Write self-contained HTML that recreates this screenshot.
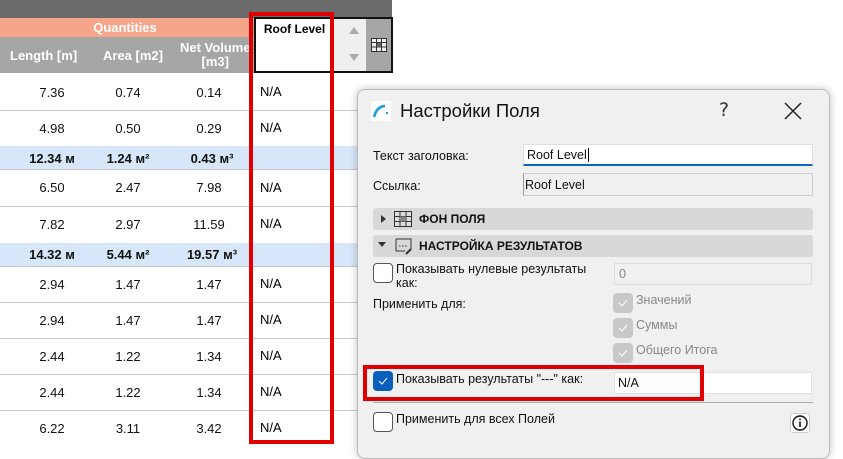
<!DOCTYPE html>
<html><head><meta charset="utf-8"><style>
*{margin:0;padding:0;box-sizing:border-box}
body{width:843px;height:445px;overflow:hidden;background:#fff;position:relative;font-family:"Liberation Sans","Noto Sans CJK SC",sans-serif}
.a{position:absolute}
.num{position:absolute;font-size:13px;color:#111;width:80px;text-align:center}
.b{font-weight:bold}
.sep{position:absolute;left:0;width:392px;height:1px;background:#c8c8c8}
.sub{position:absolute;left:0;width:392px;height:23px;background:#d7e6f8}
.lbl{position:absolute;font-size:12.5px;color:#111;font-family:"Liberation Sans",sans-serif}
.cb{position:absolute;width:20px;height:20px;border:1px solid #555;border-radius:4px;background:#fff}
.dcb{position:absolute;width:20px;height:20px;border-radius:4px;background:#c8c8c8}
.fld{position:absolute;background:#fff;border:1px solid #e0e0e0}
</style></head><body>
<div class="a" style="left:0;top:0;width:392px;height:18px;background:#6b6b6b"></div>
<div class="a" style="left:0;top:18px;width:250px;height:19px;background:#f4a58a;color:#fff;font-weight:bold;font-size:13px;text-align:center;line-height:19px">Quantities</div>
<div class="a" style="left:0;top:37px;width:250px;height:36px;background:#a6a6a6"></div>
<div class="a b" style="left:10px;top:48px;color:#fff;font-size:13px">Length [m]</div>
<div class="a b" style="left:103px;top:48px;color:#fff;font-size:13px">Area [m2]</div>
<div class="a b" style="left:180px;top:41px;color:#fff;font-size:13px;text-align:center;line-height:14px">Net Volume<br>[m3]</div>
<div class="a" style="left:250px;top:18px;width:142px;height:55px;background:#a6a6a6"></div>
<div class="a" style="left:254px;top:17px;width:139px;height:56px;border:2px solid #111;background:#a6a6a6"></div>
<div class="a" style="left:256px;top:19px;width:77px;height:52px;background:#fff;font-size:12px;font-weight:bold;text-align:center;padding-top:3px">Roof Level</div>
<div class="a" style="left:334px;top:19px;width:32px;height:52px;background:#efefef"></div>
<div class="a" style="left:349px;top:27px;border:5px solid transparent;border-bottom:7px solid #aaa;border-top:0"></div>
<div class="a" style="left:349px;top:54px;border:5px solid transparent;border-top:7px solid #aaa;border-bottom:0"></div>
<svg class="a" style="left:371px;top:38px" width="16" height="14"><rect x="0.5" y="0.5" width="15" height="13" fill="#eee" stroke="#333"/><path d="M0 4.5H16M0 9H16M5.5 0V14M10.5 0V14" stroke="#333"/><rect x="6" y="5" width="4" height="4" fill="#666"/></svg>

<div class="sep" style="top:110px"></div>
<div class="sub" style="top:146px"></div>
<div class="sep" style="top:169px"></div>
<div class="sep" style="top:206px"></div>
<div class="sub" style="top:243px"></div>
<div class="sep" style="top:266px"></div>
<div class="sep" style="top:302px"></div>
<div class="sep" style="top:338px"></div>
<div class="sep" style="top:374px"></div>
<div class="sep" style="top:410px"></div>

<div class="num" style="left:12px;top:85px">7.36</div><div class="num" style="left:88px;top:85px">0.74</div><div class="num" style="left:169px;top:85px">0.14</div>
<div class="num" style="left:12px;top:121px">4.98</div><div class="num" style="left:88px;top:121px">0.50</div><div class="num" style="left:169px;top:121px">0.29</div>
<div class="num b" style="left:12px;top:151px">12.34 м</div><div class="num b" style="left:88px;top:151px">1.24 м²</div><div class="num b" style="left:172px;top:151px">0.43 м³</div>
<div class="num" style="left:12px;top:180px">6.50</div><div class="num" style="left:88px;top:180px">2.47</div><div class="num" style="left:169px;top:180px">7.98</div>
<div class="num" style="left:12px;top:217px">7.82</div><div class="num" style="left:88px;top:217px">2.97</div><div class="num" style="left:169px;top:217px">11.59</div>
<div class="num b" style="left:12px;top:247px">14.32 м</div><div class="num b" style="left:88px;top:247px">5.44 м²</div><div class="num b" style="left:172px;top:247px">19.57 м³</div>
<div class="num" style="left:12px;top:277px">2.94</div><div class="num" style="left:88px;top:277px">1.47</div><div class="num" style="left:169px;top:277px">1.47</div>
<div class="num" style="left:12px;top:313px">2.94</div><div class="num" style="left:88px;top:313px">1.47</div><div class="num" style="left:169px;top:313px">1.47</div>
<div class="num" style="left:12px;top:349px">2.44</div><div class="num" style="left:88px;top:349px">1.22</div><div class="num" style="left:169px;top:349px">1.34</div>
<div class="num" style="left:12px;top:385px">2.44</div><div class="num" style="left:88px;top:385px">1.22</div><div class="num" style="left:169px;top:385px">1.34</div>
<div class="num" style="left:12px;top:421px">6.22</div><div class="num" style="left:88px;top:421px">3.11</div><div class="num" style="left:169px;top:421px">3.42</div>
<div class="a" style="left:260px;top:84px;font-size:13px">N/A</div>
<div class="a" style="left:260px;top:120px;font-size:13px">N/A</div>
<div class="a" style="left:260px;top:180px;font-size:13px">N/A</div>
<div class="a" style="left:260px;top:216px;font-size:13px">N/A</div>
<div class="a" style="left:260px;top:276px;font-size:13px">N/A</div>
<div class="a" style="left:260px;top:312px;font-size:13px">N/A</div>
<div class="a" style="left:260px;top:348px;font-size:13px">N/A</div>
<div class="a" style="left:260px;top:384px;font-size:13px">N/A</div>
<div class="a" style="left:260px;top:420px;font-size:13px">N/A</div>
<div class="a" style="left:249px;top:12px;width:85px;height:432px;border:4px solid #e00000"></div>

<!-- dialog -->
<div class="a" style="left:357px;top:89px;width:473px;height:370px;background:#f0f0f0;border:1px solid #bcbcbc;border-radius:8px;box-shadow:0 0 8px rgba(0,0,0,0.25)"></div>
<svg class="a" style="left:371px;top:101px" width="20" height="20"><rect width="20" height="20" fill="#fff"/><path d="M3 16Q6 5 14 5" stroke="#1e9fd6" stroke-width="2.6" fill="none"/><rect x="15" y="11" width="2" height="2" fill="#1e9fd6"/></svg>
<div class="a" style="left:400px;top:100px;font-size:18.5px;color:#111;font-family:'Liberation Sans',sans-serif">Настройки Поля</div>
<div class="a" style="left:719px;top:99px;font-size:19px;color:#333;font-family:'DejaVu Sans',sans-serif">?</div>
<svg class="a" style="left:784px;top:102px" width="18" height="18"><path d="M1 1L17 17M17 1L1 17" stroke="#222" stroke-width="1.5"/></svg>

<div class="lbl" style="left:373px;top:149px">Текст заголовка:</div>
<div class="fld" style="left:523px;top:144px;width:290px;height:22px;border-bottom:2px solid #0a66c2"></div>
<div class="lbl" style="left:527px;top:148px">Roof Level<span style="border-left:1px solid #000;margin-left:1px"></span></div>
<div class="lbl" style="left:373px;top:179px">Ссылка:</div>
<div class="a" style="left:523px;top:173px;width:290px;height:23px;background:#f0f0f0;border:1px solid #ccc;border-left:1px solid #999"></div>
<div class="lbl" style="left:525px;top:178px">Roof Level</div>

<div class="a" style="left:373px;top:208px;width:440px;height:22px;background:#d8d8d8;border-radius:3px"></div>
<div class="a" style="left:381px;top:215px;border-left:5px solid #333;border-top:4px solid transparent;border-bottom:4px solid transparent"></div>
<svg class="a" style="left:394px;top:211px" width="18" height="16"><rect x="0.5" y="0.5" width="17" height="15" fill="#ddd" stroke="#333"/><path d="M0 5.5H18M0 10.5H18M6 0V16M12 0V16" stroke="#333"/><rect x="6" y="5.5" width="6" height="5" fill="#888"/></svg>
<div class="lbl b" style="left:419px;top:212px;font-size:12px">ФОН ПОЛЯ</div>
<div class="a" style="left:373px;top:235px;width:440px;height:22px;background:#d8d8d8;border-radius:3px"></div>
<div class="a" style="left:378px;top:242px;border-top:5px solid #333;border-left:4px solid transparent;border-right:4px solid transparent"></div>
<svg class="a" style="left:395px;top:238px" width="18" height="18"><path d="M1 1H16V11M1 1V13H10" stroke="#333" fill="none"/><path d="M4 8H12" stroke="#333" stroke-dasharray="1.5 1.5"/><path d="M11 16L16 11" stroke="#333" stroke-width="2"/></svg>
<div class="lbl b" style="left:419px;top:239px;font-size:12px">НАСТРОЙКА РЕЗУЛЬТАТОВ</div>

<div class="cb" style="left:373px;top:263px"></div>
<div class="lbl" style="left:396px;top:262px;line-height:14px">Показывать нулевые результаты<br>как:</div>
<div class="a" style="left:614px;top:263px;width:198px;height:22px;background:#f0f0f0;border:1px solid #ddd"></div>
<div class="lbl" style="left:619px;top:267px;color:#888">0</div>
<div class="lbl" style="left:373px;top:297px">Применить для:</div>
<div class="dcb" style="left:613px;top:293px"></div><div class="lbl" style="left:636px;top:293px;color:#888">Значений</div>
<div class="dcb" style="left:613px;top:318px"></div><div class="lbl" style="left:636px;top:318px;color:#888">Суммы</div>
<div class="dcb" style="left:613px;top:343px"></div><div class="lbl" style="left:636px;top:343px;color:#888">Общего Итога</div>
<svg class="a" style="left:613px;top:293px" width="20" height="70"><path d="M6 10L9 13L14 7M6 35L9 38L14 32M6 60L9 63L14 57" stroke="#fff" fill="none"/></svg>

<div class="a" style="left:373px;top:371px;width:20px;height:20px;background:#0a5fbd;border-radius:4px"></div>
<svg class="a" style="left:373px;top:371px" width="20" height="20"><path d="M6 10L9 13L14 7" stroke="#fff" fill="none"/></svg>
<div class="lbl" style="left:396px;top:372px">Показывать результаты "---" как:</div>
<div class="fld" style="left:614px;top:372px;width:198px;height:22px"></div>
<div class="lbl" style="left:618px;top:376px">N/A</div>
<div class="a" style="left:363px;top:365px;width:341px;height:36px;border:4px solid #e00000"></div>
<div class="a" style="left:373px;top:402px;width:440px;height:1px;background:#aaa"></div>
<div class="cb" style="left:373px;top:412px"></div>
<div class="lbl" style="left:396px;top:412px">Применить для всех Полей</div>
<div class="a" style="left:790px;top:413px;width:20px;height:20px;background:#fff;border:1px solid #ccc;border-radius:3px"></div>
<svg class="a" style="left:791px;top:414px" width="18" height="18"><circle cx="9" cy="9" r="7" stroke="#111" stroke-width="1.4" fill="none"/><rect x="8.2" y="7.5" width="1.6" height="5.5" fill="#111"/><rect x="8.2" y="4.5" width="1.6" height="1.6" fill="#111"/></svg>
</body></html>
